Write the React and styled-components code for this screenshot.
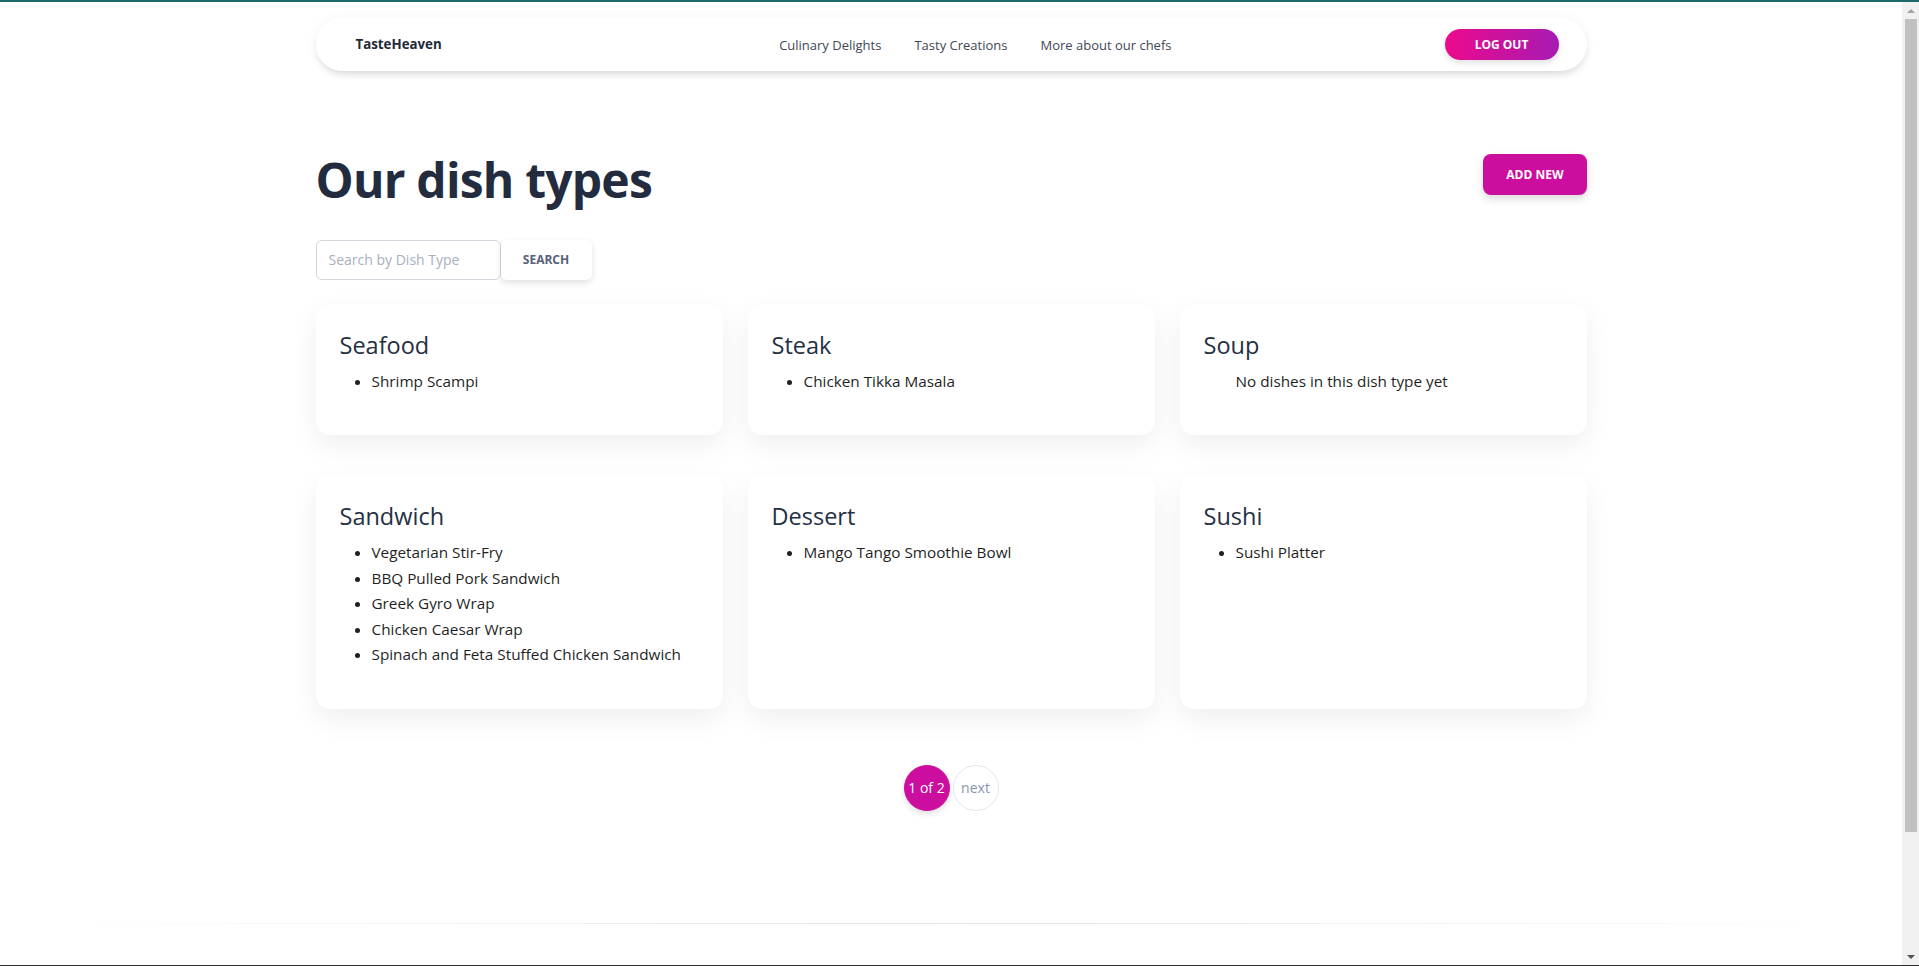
import React from 'react'
import styled, { createGlobalStyle } from 'styled-components'

const GlobalStyle = createGlobalStyle`
    html, body {
        margin: 0;
        padding: 0;
        background: #ffffff;
        overflow: hidden;
    }
    * {
        box-sizing: border-box;
    }
    body {
        font-family: "Open Sans", "Liberation Sans", sans-serif;
    }
`;

const Frame = styled.div`
    display: flex;
    height: 100vh;
    border-top: 2px solid #1a6a6c;
    border-bottom: 1px solid #2f2f2f;
`;

const Page = styled.div`
    flex: 1;
    overflow: hidden;
    background: #ffffff;
`;

const Container = styled.div`
    max-width: 1271px;
    margin: 0 auto;
`;

const Navbar = styled.nav`
    display: flex;
    align-items: center;
    height: 53px;
    margin-top: 16px;
    padding: 0 28px 0 40px;
    background: #ffffff;
    border-radius: 9999px;
    box-shadow: 0 5px 8px -3px rgba(0, 0, 0, 0.16), 0 0 14px rgba(0, 0, 0, 0.04);
`;

const Brand = styled.a`
    margin-bottom: 2px;
    font-size: 13.3px;
    font-weight: 700;
    color: #1f2937;
    text-decoration: none;
`;

const NavLinks = styled.ul`
    display: flex;
    gap: 33px;
    list-style: none;
    margin: 0 273px 2px auto;
    padding: 0;
`;

const NavLink = styled.a`
    font-size: 13px;
    color: #3f4756;
    text-decoration: none;
`;

const GradientButton = styled.button`
    width: 114px;
    height: 31px;
    border: none;
    border-radius: 9999px;
    background: linear-gradient(90deg, #ec0a8c 0%, #a61bb2 100%);
    color: #ffffff;
    font-family: inherit;
    font-size: 12px;
    font-weight: 700;
    text-transform: uppercase;
    box-shadow: 0 3px 6px rgba(0, 0, 0, 0.12);
    cursor: pointer;
`;

const HeaderRow = styled.div`
    display: flex;
    justify-content: space-between;
    align-items: flex-start;
    margin-top: 80px;
`;

const Title = styled.h1`
    margin: 0;
    font-size: 48px;
    line-height: 57.6px;
    font-weight: 700;
    letter-spacing: -0.8px;
    color: #222c3e;
`;

const SolidButton = styled.button`
    margin-top: 3px;
    height: 41px;
    padding: 0 23px;
    border: none;
    border-radius: 8px;
    background: #cc0e9f;
    color: #ffffff;
    font-family: inherit;
    font-size: 12px;
    font-weight: 700;
    text-transform: uppercase;
    box-shadow: 0 4px 8px rgba(0, 0, 0, 0.14);
    cursor: pointer;
`;

const SearchRow = styled.form`
    display: flex;
    margin-top: 31px;
`;

const SearchInput = styled.input`
    width: 185px;
    height: 40px;
    padding: 0 12px;
    border: 1px solid #d3d6dc;
    border-radius: 6px;
    font-family: inherit;
    font-size: 14px;
    color: #2d3748;
    outline: none;

    &::placeholder {
        color: #a8b0c0;
    }
`;

const SearchButton = styled.button`
    width: 91px;
    height: 40px;
    border: none;
    border-radius: 6px;
    background: #ffffff;
    color: #566179;
    font-family: inherit;
    font-size: 12px;
    font-weight: 700;
    text-transform: uppercase;
    box-shadow: 0 3px 7px rgba(0, 0, 0, 0.12);
    cursor: pointer;
`;

const CardGrid = styled.div`
    display: grid;
    grid-template-columns: repeat(3, 1fr);
    column-gap: 25px;
    row-gap: 40px;
    margin-top: 24px;
`;

const Card = styled.div`
    padding: 23px 24px 25px;
    background: #ffffff;
    border-radius: 14px;
    box-shadow: 0 10px 28px rgba(0, 0, 0, 0.065);
`;

const CardTitle = styled.h3`
    margin: 0;
    font-size: 23.5px;
    line-height: 36px;
    font-weight: 500;
    color: #253044;
`;

const DishList = styled.ul`
    margin: 6px 0 16px;
    padding-left: 32px;
`;

const Dish = styled.li`
    font-size: 15.3px;
    line-height: 25.5px;
    color: #1f1f1f;
    list-style: ${props => (props.empty ? 'none' : 'disc')};
`;

const Pagination = styled.div`
    display: flex;
    justify-content: center;
    gap: 3px;
    margin-top: 56px;
`;

const PageCircle = styled.button`
    width: 46px;
    height: 46px;
    padding: 0;
    border-radius: 50%;
    font-family: inherit;
    font-size: 14px;
    border: 1px solid ${props => (props.active ? '#cc0e9f' : '#e2e6ee')};
    background: ${props => (props.active ? '#cc0e9f' : '#ffffff')};
    color: ${props => (props.active ? '#ffffff' : '#8797b2')};
    box-shadow: ${props => (props.active ? '0 3px 6px rgba(0, 0, 0, 0.12)' : 'none')};
    cursor: pointer;
`;

const Footer = styled.footer`
    margin-top: 112px;
    padding-bottom: 160px;
`;

const FooterRule = styled.hr`
    height: 1px;
    margin: 0;
    border: none;
    background: linear-gradient(90deg, rgba(0, 0, 0, 0) 2%, rgba(0, 0, 0, 0.1) 50%, rgba(0, 0, 0, 0) 98%);
`;

const Scrollbar = styled.div`
    display: flex;
    flex-direction: column;
    width: 17px;
    background: #f1f1f1;
`;

const ScrollArrow = styled.div`
    display: flex;
    align-items: center;
    justify-content: center;
    height: 17px;

    &::after {
        content: '';
        border-left: 4px solid transparent;
        border-right: 4px solid transparent;
        ${props => (props.down
            ? 'border-top: 4px solid #505050;'
            : 'border-bottom: 4px solid #a3a3a3;')}
    }
`;

const ScrollTrack = styled.div`
    flex: 1;
    padding: 0 2px 0 3px;
`;

const ScrollThumb = styled.div`
    height: 813px;
    background: #c1c1c1;
`;

const dishTypes = [
    { name: 'Seafood', dishes: ['Shrimp Scampi'] },
    { name: 'Steak', dishes: ['Chicken Tikka Masala'] },
    { name: 'Soup', dishes: [] },
    {
        name: 'Sandwich',
        dishes: [
            'Vegetarian Stir-Fry',
            'BBQ Pulled Pork Sandwich',
            'Greek Gyro Wrap',
            'Chicken Caesar Wrap',
            'Spinach and Feta Stuffed Chicken Sandwich',
        ],
    },
    { name: 'Dessert', dishes: ['Mango Tango Smoothie Bowl'] },
    { name: 'Sushi', dishes: ['Sushi Platter'] },
];

function DishTypeCard({ type }) {
    return (
        <Card>
            <CardTitle>{type.name}</CardTitle>
            <DishList>
                {type.dishes.length === 0
                    ? <Dish empty>No dishes in this dish type yet</Dish>
                    : type.dishes.map(dish => <Dish key={dish}>{dish}</Dish>)}
            </DishList>
        </Card>
    );
}

export default function App() {
    return (
        <Frame>
            <GlobalStyle />
            <Page>
                <Container>
                    <Navbar>
                        <Brand href="#">TasteHeaven</Brand>
                        <NavLinks>
                            <li><NavLink href="#">Culinary Delights</NavLink></li>
                            <li><NavLink href="#">Tasty Creations</NavLink></li>
                            <li><NavLink href="#">More about our chefs</NavLink></li>
                        </NavLinks>
                        <GradientButton>Log out</GradientButton>
                    </Navbar>

                    <HeaderRow>
                        <Title>Our dish types</Title>
                        <SolidButton>Add new</SolidButton>
                    </HeaderRow>

                    <SearchRow onSubmit={e => e.preventDefault()}>
                        <SearchInput placeholder="Search by Dish Type" />
                        <SearchButton type="submit">Search</SearchButton>
                    </SearchRow>

                    <CardGrid>
                        {dishTypes.map(type => <DishTypeCard key={type.name} type={type} />)}
                    </CardGrid>

                    <Pagination>
                        <PageCircle active>1 of 2</PageCircle>
                        <PageCircle>next</PageCircle>
                    </Pagination>
                </Container>

                <Footer>
                    <FooterRule />
                </Footer>
            </Page>
            <Scrollbar>
                <ScrollArrow />
                <ScrollTrack>
                    <ScrollThumb />
                </ScrollTrack>
                <ScrollArrow down />
            </Scrollbar>
        </Frame>
    );
}
